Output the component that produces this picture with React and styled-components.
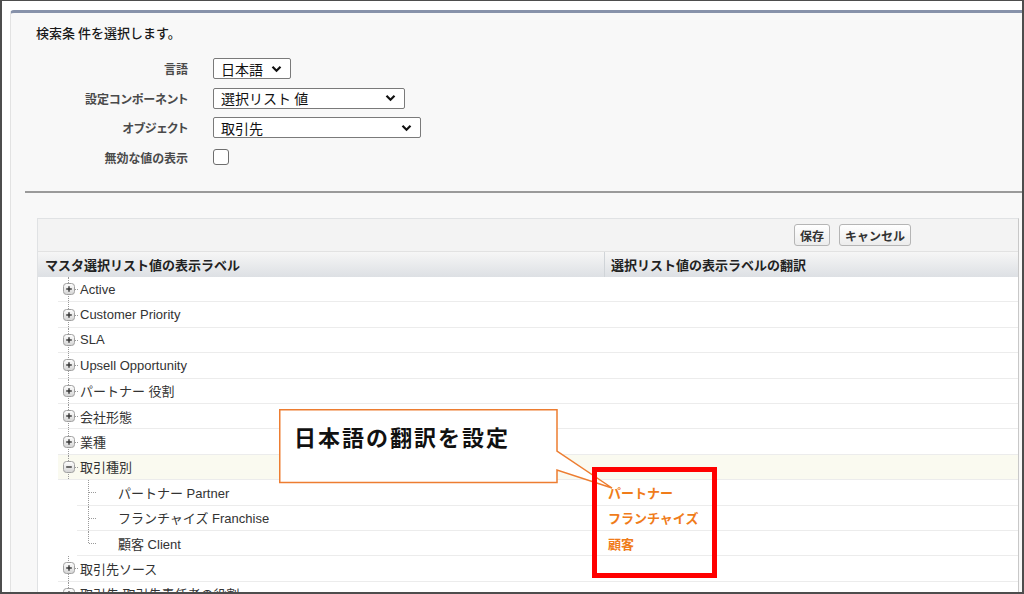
import styled, { createGlobalStyle } from "styled-components";

const FONT = `"Liberation Sans", Arial, "Noto Sans CJK JP", sans-serif`;
const JP = `"Noto Sans CJK JP", "Liberation Sans", sans-serif`;

const GlobalStyle = createGlobalStyle`
    html, body {
        margin: 0;
        padding: 0;
        background: #ffffff;
    }
    body {
        font-family: ${FONT};
        color: #333;
    }
`;

const Frame = styled.div`
    position: relative;
    width: 1024px;
    height: 594px;
    box-sizing: border-box;
    border: 2px solid #4d4d4d;
    border-top-width: 1px;
    background: #fff;
    overflow: hidden;
    padding: 9px 0 0 8px;
`;

const Panel = styled.div`
    background: #f8f8f8;
    border-top: 3px solid #8792aa;
    border-left: 1px solid #e2e2e2;
    border-radius: 4px 0 0 0;
    height: 600px;
`;

const Heading = styled.div`
    padding: 11px 0 0 25px;
    font-family: ${JP};
    font-size: 13px;
    line-height: 18px;
    font-weight: 500;
    color: #1a1a1a;
`;

const Form = styled.div`
    display: grid;
    grid-template-columns: 177px 1fr;
    column-gap: 25px;
    grid-auto-rows: 29.5px;
    align-items: center;
    margin-top: 12px;
`;

const Label = styled.div`
    text-align: right;
    font-family: ${JP};
    font-size: 12px;
    font-weight: 700;
    color: #4a4a4a;
    font-feature-settings: "palt";
`;

const Select = styled.div`
    width: ${(p) => p.$width}px;
    height: 21px;
    box-sizing: border-box;
    border: 1px solid #7a7a7a;
    border-radius: 2px;
    background: #fff;
    display: flex;
    align-items: center;
    justify-content: space-between;
    padding: 0 8px 0 7px;
    font-family: ${JP};
    font-size: 14px;
    color: #111;
`;

const Checkbox = styled.div`
    width: 16px;
    height: 16px;
    box-sizing: border-box;
    border: 1px solid #6e6e6e;
    border-radius: 3px;
    background: #fff;
`;

const Divider = styled.div`
    margin: 19px 0 0 14px;
    height: 2px;
    background: #9a9a9a;
`;

const Table = styled.div`
    margin: 25px 3px 0 26px;
    border: 1px solid #e0e2e4;
    border-right-color: #c8c8c8;
    background: #fff;
`;

const Toolbar = styled.div`
    height: 32px;
    background: #f3f3f3;
    border-bottom: 1px solid #e2e2e2;
    display: flex;
    align-items: center;
    justify-content: flex-end;
    gap: 9px;
    padding-right: 107px;
`;

const Button = styled.div`
    height: 22px;
    box-sizing: border-box;
    padding: 0 5px;
    border: 1px solid #b5b5b5;
    border-radius: 3px;
    background: linear-gradient(#ffffff, #ececec);
    display: flex;
    align-items: center;
    font-family: ${JP};
    font-size: 12px;
    font-weight: 700;
    color: #333;
`;

const HeaderRow = styled.div`
    display: flex;
    height: 25px;
    background: linear-gradient(#f6f6f6, #dde0e4);
`;

const HeaderCell = styled.div`
    width: ${(p) => (p.$width ? `${p.$width}px` : "auto")};
    flex: ${(p) => (p.$width ? "none" : 1)};
    box-sizing: border-box;
    padding-left: ${(p) => p.$pad}px;
    display: flex;
    align-items: center;
    font-family: ${JP};
    font-size: 13px;
    font-weight: 700;
    color: #222;
    border-left: ${(p) => (p.$divider ? "1px solid #d0d4d8" : "none")};
`;

const Row = styled.div`
    display: flex;
    height: 25.4px;
    box-sizing: border-box;
    margin-left: ${(p) => (p.$child ? 39 : 20)}px;
    border-bottom: 1px solid #ececec;
    background: ${(p) => (p.$active ? "#fafaf0" : "transparent")};
`;

const TreeCell = styled.div`
    width: ${(p) => p.$width}px;
    flex: none;
    display: flex;
    align-items: center;
    position: relative;
    font-size: 13px;
    color: #333;
    white-space: nowrap;
`;

const Guide = styled.span`
    position: absolute;
    left: ${(p) => p.$x}px;
    top: 0;
    height: ${(p) => (p.$half ? "50%" : "100%")};
    border-left: 1px dotted #9a9a9a;
`;

const Branch = styled.span`
    position: absolute;
    left: ${(p) => p.$x}px;
    top: 50%;
    width: ${(p) => p.$len}px;
    border-top: 1px dotted #9a9a9a;
`;

const IconSlot = styled.span`
    position: relative;
    display: flex;
    margin: 0 5px 0 5px;
`;

const Text = styled.span`
    padding-left: ${(p) => p.$pad || 0}px;
`;

const ValueCell = styled.div`
    flex: 1;
    display: flex;
    align-items: center;
    padding-left: 5px;
    font-family: ${JP};
    font-size: 13px;
    font-weight: 700;
    color: #f07c1a;
`;

const Callout = styled.div`
    position: absolute;
    left: 277px;
    top: 408px;
    width: 336px;
    height: 82px;
`;

const CalloutText = styled.div`
    position: absolute;
    left: 15px;
    top: 13px;
    font-family: ${JP};
    font-size: 22px;
    line-height: 28px;
    font-weight: 700;
    letter-spacing: 2px;
    color: #111;
`;

const Highlight = styled.div`
    position: absolute;
    left: 590px;
    top: 466px;
    width: 125px;
    height: 111px;
    box-sizing: border-box;
    border: 5px solid #ff0000;
`;

function Chevron() {
    return (
        <svg width="11" height="8" viewBox="0 0 11 8">
            <path d="M1.5 1.8 L5.5 5.8 L9.5 1.8" fill="none" stroke="#111" strokeWidth="2.2" />
        </svg>
    );
}

function ToggleIcon({ open }) {
    return (
        <svg width="12" height="12" viewBox="0 0 12 12">
            <defs>
                <linearGradient id="tg" x1="0" y1="0" x2="0" y2="1">
                    <stop offset="0" stopColor="#ffffff" />
                    <stop offset="1" stopColor="#d4d4d4" />
                </linearGradient>
            </defs>
            <rect x="0.5" y="0.5" width="11" height="11" rx="3" fill="url(#tg)" stroke="#a0a0a0" />
            <path d="M3.2 6 H8.8" stroke="#333" strokeWidth="1.4" />
            {!open && <path d="M6 3.2 V8.8" stroke="#333" strokeWidth="1.4" />}
        </svg>
    );
}

const COL1 = 545;

const TOP_ROWS = [
    "Active",
    "Customer Priority",
    "SLA",
    "Upsell Opportunity",
    "パートナー 役割",
    "会社形態",
    "業種",
];

const CHILD_ROWS = [
    { label: "パートナー Partner", value: "パートナー" },
    { label: "フランチャイズ Franchise", value: "フランチャイズ" },
    { label: "顧客 Client", value: "顧客" },
];

function TopRow({ label, open, active }) {
    return (
        <Row $active={active}>
            <TreeCell $width={COL1}>
                <Guide $x={10} />
                <IconSlot>
                    <ToggleIcon open={open} />
                </IconSlot>
                <Branch $x={17} $len={3} />
                <Text>{label}</Text>
            </TreeCell>
            <ValueCell />
        </Row>
    );
}

export default function App() {
    return (
        <>
            <GlobalStyle />
            <Frame>
                <Panel>
                    <Heading>検索条 件を選択します。</Heading>
                    <Form>
                        <Label>言語</Label>
                        <Select $width={78}>
                            日本語
                            <Chevron />
                        </Select>
                        <Label>設定コンポーネント</Label>
                        <Select $width={192}>
                            選択リスト 値
                            <Chevron />
                        </Select>
                        <Label>オブジェクト</Label>
                        <Select $width={208}>
                            取引先
                            <Chevron />
                        </Select>
                        <Label>無効な値の表示</Label>
                        <Checkbox />
                    </Form>
                    <Divider />
                    <Table>
                        <Toolbar>
                            <Button>保存</Button>
                            <Button>キャンセル</Button>
                        </Toolbar>
                        <HeaderRow>
                            <HeaderCell $width={566} $pad={7}>
                                マスタ選択リスト値の表示ラベル
                            </HeaderCell>
                            <HeaderCell $pad={6} $divider>
                                選択リスト値の表示ラベルの翻訳
                            </HeaderCell>
                        </HeaderRow>
                        {TOP_ROWS.map((label) => (
                            <TopRow key={label} label={label} />
                        ))}
                        <TopRow label="取引種別" open active />
                        {CHILD_ROWS.map((row, i) => (
                            <Row key={row.label} $child>
                                <TreeCell $width={COL1 - 19}>
                                    <Guide $x={11} $half={i === CHILD_ROWS.length - 1} />
                                    <Branch $x={12} $len={7} />
                                    <Text $pad={41}>{row.label}</Text>
                                </TreeCell>
                                <ValueCell>{row.value}</ValueCell>
                            </Row>
                        ))}
                        <TopRow label="取引先ソース" />
                        <TopRow label="取引先 取引先責任者の役割" />
                    </Table>
                </Panel>
                <Callout>
                    <svg width="336" height="82" viewBox="0 0 336 82">
                        <path
                            d="M0.75 0.75 H278 V42 L333 79 L278 61 V73.5 H0.75 Z"
                            fill="#ffffff"
                            stroke="#ed7d31"
                            strokeWidth="1.5"
                        />
                    </svg>
                    <CalloutText>日本語の翻訳を設定</CalloutText>
                </Callout>
                <Highlight />
            </Frame>
        </>
    );
}
